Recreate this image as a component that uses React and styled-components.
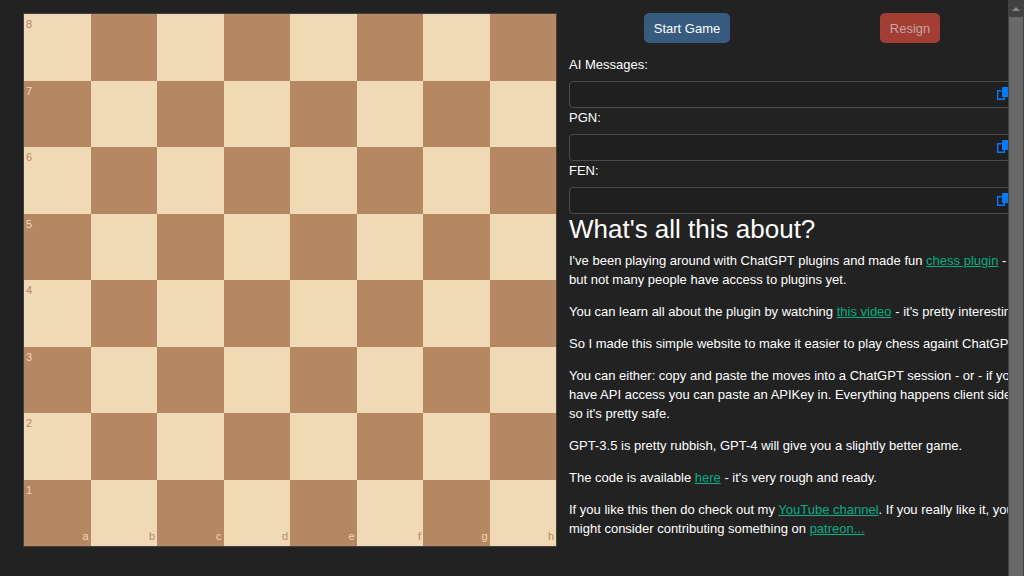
import React from "react";
import styled, { createGlobalStyle } from "styled-components";

const GlobalStyle = createGlobalStyle`
  *, *::before, *::after { box-sizing: border-box; }
  body {
    margin: 0;
    background: #222;
    color: #fff;
    font: 13px/19px "Liberation Sans", Arial, sans-serif;
  }
`;

const Shell = styled.div`
  display: flex;
  height: 100vh;
  overflow: hidden;
`;

const Page = styled.main`
  flex: 1;
  min-width: 0;
  display: flex;
  align-items: flex-start;
  gap: 12px;
  padding: 13px 0 0 23px;
  overflow: hidden;
`;

const Board = styled.div`
  flex: 0 0 534px;
  aspect-ratio: 1;
  display: grid;
  grid-template: repeat(8, 1fr) / repeat(8, 1fr);
  border: 1px solid #404040;
`;

const Square = styled.div`
  display: flex;
  justify-content: space-between;
  min-width: 0;
  min-height: 0;
  padding: 2px;
  font-size: 11px;
  line-height: 16px;
  background: ${(p) => (p.$light ? "#f0d9b5" : "#b58863")};
  color: ${(p) => (p.$light ? "#b58863" : "#f0d9b5")};
`;

const File = styled.span`
  align-self: flex-end;
  margin-left: auto;
`;

const Info = styled.section`
  flex: 1 0 456px;
`;

const Actions = styled.div`
  display: flex;
  justify-content: space-around;
  margin-bottom: 12px;
  padding-right: 10px;
`;

const Button = styled.button`
  height: 30px;
  padding: 0 10px;
  border: 0;
  border-radius: 5px;
  background: ${(p) => (p.$danger ? "#a23e33" : "#375a7f")};
  color: ${(p) => (p.$danger ? "#c5a7a3" : "#fff")};
  font: inherit;
`;

const Label = styled.label`
  display: block;
  margin-bottom: 7px;
`;

const Field = styled.div`
  display: flex;
  align-items: center;
  height: 27px;
  border: 1px solid #4a4a4a;
  border-radius: 4px;
  background: #1f1f1f;
`;

const TextInput = styled.input`
  flex: 1;
  min-width: 0;
  height: 25px;
  padding: 0 8px;
  border: 0;
  outline: 0;
  background: transparent;
  color: #fff;
  font: inherit;
`;

const CopyButton = styled.button`
  display: flex;
  margin: 0 13px 2px 0;
  padding: 0;
  border: 0;
  background: none;
  color: #007bff;
`;

const Heading = styled.h1`
  margin: 0 0 6px;
  font-size: 26px;
  font-weight: 400;
  line-height: 31px;
`;

const Paragraph = styled.p`
  margin: 0 0 13px;
`;

const Link = styled.a`
  color: #00b083;
  text-decoration: underline;
`;

const ScrollTrack = styled.div`
  flex: 0 0 16px;
  display: flex;
  flex-direction: column;
  align-items: center;
  background: #424242;
`;

const ScrollArrow = styled.svg`
  flex: 0 0 17px;
  width: 16px;
`;

const ScrollThumb = styled.div`
  flex: 1;
  width: 14px;
  background: #686868;
`;

const ranks = [8, 7, 6, 5, 4, 3, 2, 1];
const files = ["a", "b", "c", "d", "e", "f", "g", "h"];

function CopyField({ id, label }) {
  return (
    <>
      <Label htmlFor={id}>{label}</Label>
      <Field>
        <TextInput id={id} type="text" readOnly />
        <CopyButton type="button" aria-label={`Copy ${label}`}>
          <svg width="14" height="13" viewBox="0 0 14 13">
            <path d="M6 0h7a1 1 0 0 1 1 1v8a1 1 0 0 1-1 1H6a1 1 0 0 1-1-1V1a1 1 0 0 1 1-1z" fill="currentColor" />
            <path d="M4.500 3.700H.7v8.600h6.600V10" fill="none" stroke="currentColor" strokeWidth="1.4" />
          </svg>
        </CopyButton>
      </Field>
    </>
  );
}

export default function App() {
  return (
    <Shell>
      <GlobalStyle />
      <Page>
        <Board>
          {ranks.map((rank, r) =>
            files.map((file, f) => (
              <Square key={file + rank} $light={(r + f) % 2 === 0}>
                {f === 0 && <span>{rank}</span>}
                {r === 7 && <File>{file}</File>}
              </Square>
            ))
          )}
        </Board>
        <Info>
          <Actions>
            <Button type="button">Start Game</Button>
            <Button type="button" $danger disabled>Resign</Button>
          </Actions>
          <CopyField id="messages" label="AI Messages:" />
          <CopyField id="pgn" label="PGN:" />
          <CopyField id="fen" label="FEN:" />
          <Heading>What's all this about?</Heading>
          <Paragraph>
            I've been playing around with ChatGPT plugins and made fun <Link href="#plugin">chess plugin</Link> - but
            not many people have access to plugins yet.
          </Paragraph>
          <Paragraph>
            You can learn all about the plugin by watching <Link href="#video">this video</Link> - it's pretty
            interesting.
          </Paragraph>
          <Paragraph>So I made this simple website to make it easier to play chess againt ChatGPT.</Paragraph>
          <Paragraph>
            You can either: copy and paste the moves into a ChatGPT session - or - if you have API access you can
            paste an APIKey in. Everything happens client side so it's pretty safe.
          </Paragraph>
          <Paragraph>GPT-3.5 is pretty rubbish, GPT-4 will give you a slightly better game.</Paragraph>
          <Paragraph>
            The code is available <Link href="#code">here</Link> - it's very rough and ready.
          </Paragraph>
          <Paragraph>
            If you like this then do check out my <Link href="#youtube">YouTube channel</Link>. If you really like it,
            you might consider contributing something on <Link href="#patreon">patreon...</Link>
          </Paragraph>
        </Info>
      </Page>
      <ScrollTrack>
        <ScrollArrow viewBox="0 0 16 17" aria-hidden="true">
          <path d="M4 11l4-4 4 4z" fill="#868686" />
        </ScrollArrow>
        <ScrollThumb />
      </ScrollTrack>
    </Shell>
  );
}
